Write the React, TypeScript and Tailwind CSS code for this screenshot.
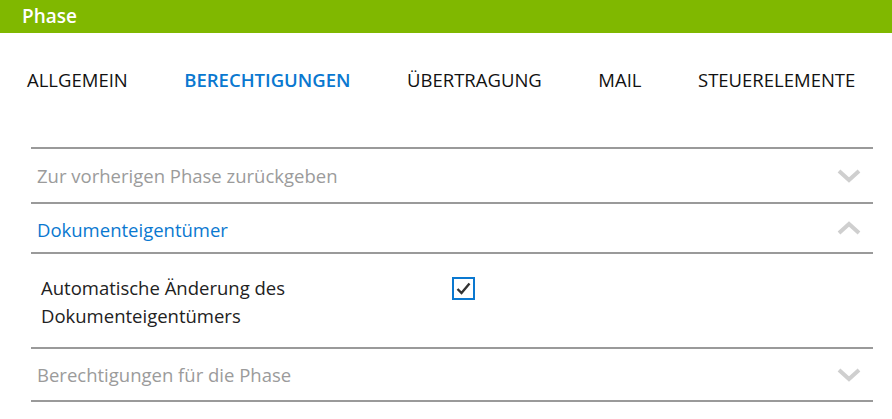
import React, { useState } from 'react';

const tabs = ['ALLGEMEIN', 'BERECHTIGUNGEN', 'ÜBERTRAGUNG', 'MAIL', 'STEUERELEMENTE'];

const Chevron: React.FC<{ up?: boolean }> = ({ up }) => (
    <svg width="24" height="14" viewBox="0 0 24 14" className="shrink-0">
        <polyline
            points={up ? '2,12 12,3 22,12' : '2,2 12,11 22,2'}
            fill="none"
            stroke="#cfcfcf"
            strokeWidth="4"
            strokeLinejoin="miter"
        />
    </svg>
);

interface SectionProps {
    title: string;
    open?: boolean;
    height: string;
    children?: React.ReactNode;
}

const Section: React.FC<SectionProps> = ({ title, open, height, children }) => (
    <div className="border-t-2 border-[#9a9a9a]">
        <div className={`flex items-center justify-between pl-[6px] pr-[12px] ${height}`}>
            <span className={`text-[18.5px] ${open ? 'text-[#0a78d0] pt-[3px]' : 'text-[#9b9b9b]'}`}>{title}</span>
            <Chevron up={open} />
        </div>
        {open && children}
    </div>
);

const App: React.FC = () => {
    const [active] = useState(1);
    const [checked, setChecked] = useState(true);

    return (
        <div className="w-[892px] h-[419px] bg-white overflow-hidden" style={{ fontFamily: '"Open Sans", "Noto Sans", sans-serif' }}>
            {/* Header */}
            <div className="h-[33px] bg-[#80b800] flex items-center pl-[22px]">
                <span className="text-white text-[19px] font-semibold">Phase</span>
            </div>

            {/* Tabs */}
            <div className="flex items-center gap-[56.5px] pl-[27px] mt-[35px] h-[24px]">
                {tabs.map((t, i) => (
                    <span
                        key={t}
                        className={`text-[18.5px] leading-[24px] ${i === active ? 'text-[#0a78d0] font-semibold' : 'text-[#111]'}`}
                    >
                        {t}
                    </span>
                ))}
            </div>

            {/* Accordion */}
            <div className="ml-[31px] mr-[19px] mt-[55px] border-b-2 border-[#9a9a9a]">
                <Section title="Zur vorherigen Phase zurückgeben" height="h-[53px]" />
                <Section title="Dokumenteigentümer" open height="h-[48px]">
                    <div className="border-t-2 border-[#9a9a9a] h-[95px] pt-[20px] pl-[10px] flex items-start">
                        <div className="w-[411px] text-[18.5px] leading-[28px] text-[#222]">
                            Automatische Änderung des
                            <br />
                            Dokumenteigentümers
                        </div>
                        <button
                            onClick={() => setChecked(!checked)}
                            className="mt-[3px] w-[23px] h-[23px] border-2 border-[#0a78d0] flex items-center justify-center bg-white"
                        >
                            {checked && (
                                <svg width="15" height="13" viewBox="0 0 15 13">
                                    <polyline points="1.5,7 5.5,11 13.5,1.5" fill="none" stroke="#333" strokeWidth="2.4" />
                                </svg>
                            )}
                        </button>
                    </div>
                </Section>
                <Section title="Berechtigungen für die Phase" height="h-[51px]" />
            </div>
        </div>
    );
};

export default App;
